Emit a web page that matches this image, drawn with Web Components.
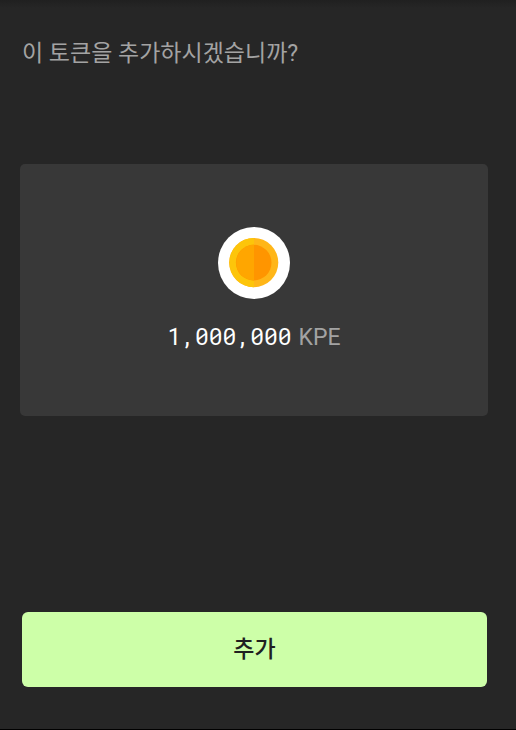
<!DOCTYPE html>
<html lang="ko">
<head>
<meta charset="utf-8">
<meta name="viewport" content="width=device-width, initial-scale=1">
<title>토큰 추가</title>
<style>
    body {
        margin: 0;
        background: #262626;
        color: #a3a3a3;
        font-family: Roboto, "Noto Sans CJK KR", sans-serif;
    }
</style>
</head>
<body>

<add-token-page>
    <span slot="title">이 토큰을 추가하시겠습니까?</span>
    <token-card amount="1,000,000" symbol="KPE">
        <token-icon></token-icon>
    </token-card>
    <primary-button slot="action">추가</primary-button>
</add-token-page>

<script>
const page_template = document.createElement('template');
page_template.innerHTML = `
    <style>
        :host {
            display: flex;
            flex-direction: column;
            box-sizing: border-box;
            min-height: 100vh;
            padding: 38px 28px 42px 20px;
            border-bottom: 1px solid #000;
            background: linear-gradient(#202020, #262626 8px);
        }
        h1 {
            margin: 0 2px;
            font-size: 23px;
            font-weight: 400;
            line-height: 32px;
        }
        main {
            flex: 1;
            padding: 94px 0;
        }
        footer {
            padding: 0 1px 0 2px;
        }
    </style>

    <h1><slot name="title"></slot></h1>
    <main><slot></slot></main>
    <footer><slot name="action"></slot></footer>
`;

class AddTokenPage extends HTMLElement {
    constructor() {
        super();
        this.attachShadow({ mode: 'open' });
        this.shadowRoot.appendChild(page_template.content.cloneNode(true));
    }
}

const card_template = document.createElement('template');
card_template.innerHTML = `
    <style>
        :host {
            display: flex;
            flex-direction: column;
            align-items: center;
            gap: 21px;
            padding: 63px 20px 62px;
            border-radius: 5px;
            background: #383838;
        }
        p {
            display: flex;
            align-items: baseline;
            gap: 7px;
            margin: 0;
            font-size: 23px;
            line-height: 32px;
        }
        .amount {
            color: #fff;
            font-family: "Roboto Mono", "DejaVu Sans Mono", monospace;
        }
        .symbol {
            color: #a3a3a3;
            font-family: Roboto, sans-serif;
        }
    </style>

    <slot></slot>
    <p><span class="amount"></span><span class="symbol"></span></p>
`;

class TokenCard extends HTMLElement {
    constructor() {
        super();
        this.attachShadow({ mode: 'open' });
        this.shadowRoot.appendChild(card_template.content.cloneNode(true));
    }

    connectedCallback() {
        this.shadowRoot.querySelector('.amount').textContent = this.getAttribute('amount');
        this.shadowRoot.querySelector('.symbol').textContent = this.getAttribute('symbol');
    }
}

const icon_template = document.createElement('template');
icon_template.innerHTML = `
    <style>
        :host {
            display: block;
            width: 72px;
            height: 72px;
        }
        svg {
            display: block;
            width: 100%;
            height: 100%;
        }
    </style>

    <svg viewBox="0 0 72 72" aria-hidden="true">
        <circle cx="36" cy="36" r="36" fill="#fff"/>
        <circle cx="35.7" cy="35.6" r="24.6" fill="#ffb618"/>
        <path d="M36 11A24.6 24.6 0 0 0 36 60.2Z" fill="#fdc50a"/>
        <circle cx="35.7" cy="35.6" r="17.8" fill="#ff9500"/>
        <path d="M36 17.8A17.8 17.8 0 0 0 36 53.4Z" fill="#ffa600"/>
    </svg>
`;

class TokenIcon extends HTMLElement {
    constructor() {
        super();
        this.attachShadow({ mode: 'open' });
        this.shadowRoot.appendChild(icon_template.content.cloneNode(true));
    }
}

const button_template = document.createElement('template');
button_template.innerHTML = `
    <style>
        :host {
            display: block;
        }
        button {
            display: block;
            width: 100%;
            padding: 22px 20px 21px;
            border: 0;
            border-radius: 6px;
            background: #cdffa8;
            color: #202020;
            font: inherit;
            font-size: 23px;
            font-weight: 500;
            line-height: 32px;
            cursor: pointer;
        }
    </style>

    <button type="button"><slot></slot></button>
`;

class PrimaryButton extends HTMLElement {
    constructor() {
        super();
        this.attachShadow({ mode: 'open' });
        this.shadowRoot.appendChild(button_template.content.cloneNode(true));
    }
}

window.customElements.define('token-icon', TokenIcon);
window.customElements.define('token-card', TokenCard);
window.customElements.define('primary-button', PrimaryButton);
window.customElements.define('add-token-page', AddTokenPage);
</script>
</body>
</html>
